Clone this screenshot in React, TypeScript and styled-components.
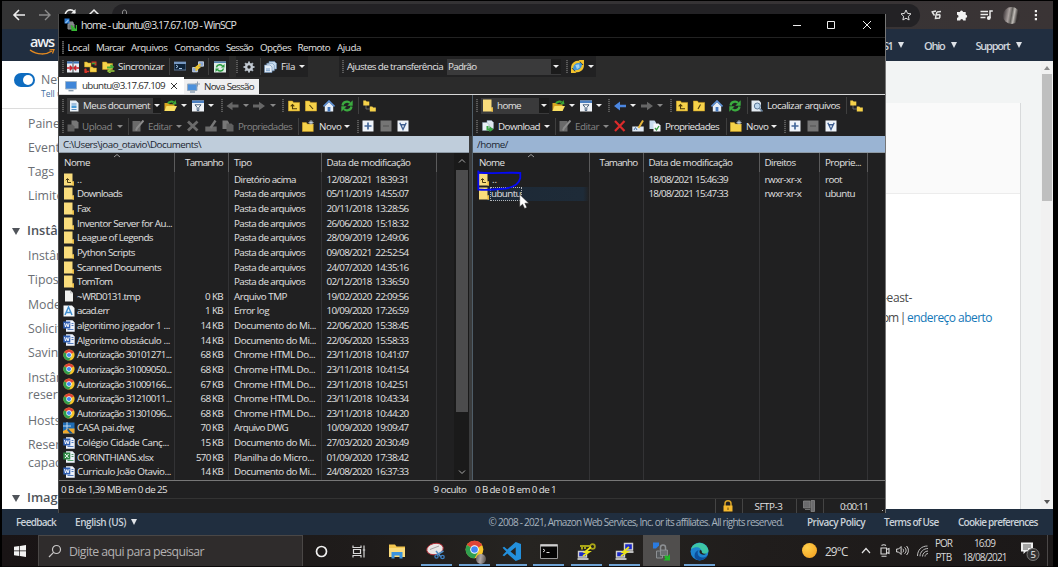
import React, { useLayoutEffect, useRef } from "react";
import styled, { createGlobalStyle, css } from "styled-components";

const Global = createGlobalStyle`
  * { box-sizing: border-box; }
  body { margin: 0; background: #000; overflow: hidden; }
`;

const UI = `"Open Sans", "Noto Sans", sans-serif`;

/* ---------- text that is tracked to a given measure ---------- */
const FitSpan = styled.span<{ $c?: string; $s?: number; $b?: boolean }>`
  display: inline-block;
  flex: none;
  white-space: pre;
  ${(p) => p.$c && css`color: ${p.$c};`}
  ${(p) => p.$s && css`font-size: ${p.$s}px;`}
  ${(p) => p.$b && css`font-weight: 600;`}
`;

function Fit({ w, children, c, s, b }: { w: number; children: string; c?: string; s?: number; b?: boolean }) {
  const ref = useRef<HTMLSpanElement>(null);
  useLayoutEffect(() => {
    const el = ref.current;
    if (!el) return;
    el.style.letterSpacing = "0px";
    const natural = el.getBoundingClientRect().width;
    el.style.letterSpacing = `${(w - natural) / children.length}px`;
  }, [w, children]);
  return (
    <FitSpan ref={ref} $c={c} $s={s} $b={b}>
      {children}
    </FitSpan>
  );
}

/* ---------- screen and browser page ---------- */
const Screen = styled.div`
  position: relative;
  width: 1058px;
  height: 567px;
  padding: 1px 5px 0 2px;
  background: #000;
  overflow: hidden;
  display: flex;
  flex-direction: column;
  font-family: ${UI};
  font-stretch: 92%;
`;

const BrowserBar = styled.div`
  height: 28px;
  flex: none;
  background: linear-gradient(90deg, #333334, #353335 60%, #3a3435);
  display: flex;
  align-items: center;
  padding-left: 10px;
  svg { flex: none; display: block; }
`;
const NavIcon = styled.div<{ $w: number }>`
  width: ${(p) => p.$w}px;
  flex: none;
`;
const Address = styled.div`
  width: 808px;
  height: 23px;
  flex: none;
  border-radius: 12px;
  background: #232225;
  display: flex;
  align-items: center;
  padding: 0 8px 0 9px;
  font-size: 11.5px;
  color: #8a8a8a;
  gap: 8px;
  & > span { padding-top: 4px; }
`;
const Push = styled.div`
  flex: 1;
`;
const Avatar = styled.div`
  width: 17px;
  height: 17px;
  border-radius: 50%;
  background: linear-gradient(100deg, #4c4547 10%, #aaa2a0 35%, #62605c 50%, #c2beb9 62%, #34302f 80%);
`;

const AwsBar = styled.div`
  height: 32px;
  flex: none;
  background: #212e40;
  display: flex;
  align-items: center;
  padding: 0 28px;
  color: #cfd5dc;
  font-size: 11px;
`;
const Tri = styled.i<{ $c?: string; $w?: number; $h?: number; $l?: number; $up?: boolean }>`
  flex: none;
  width: 0;
  height: 0;
  margin-left: ${(p) => p.$l ?? 0}px;
  border: solid transparent;
  border-width: 0 ${(p) => (p.$w ?? 7) / 2}px;
  ${(p) =>
    p.$up
      ? css`border-bottom: ${p.$h ?? 6}px solid ${p.$c ?? "#dfe3e8"};`
      : css`border-top: ${p.$h ?? 6}px solid ${p.$c ?? "#dfe3e8"};`}
`;
const Gap = styled.div<{ $w: number }>`
  width: ${(p) => p.$w}px;
  flex: none;
`;

const PageBody = styled.div`
  height: 448px;
  flex: none;
  display: flex;
  background: #fff;
`;
const Sidebar = styled.div`
  width: 200px;
  flex: none;
  color: #6a6e74;
  font-size: 12.3px;
  overflow: hidden;
`;
const NewBox = styled.div`
  height: 48px;
  border-bottom: 1px solid #dcdcdc;
  padding: 11px 0 0 12px;
  display: flex;
  gap: 6px;
  line-height: 16px;
`;
const Toggle = styled.div`
  width: 21px;
  height: 14px;
  margin-top: 1px;
  border-radius: 7px;
  background: #0e6cc0;
  display: flex;
  justify-content: flex-end;
  padding: 2px;
  &::after {
    content: "";
    width: 10px;
    height: 10px;
    border-radius: 50%;
    background: #fff;
  }
`;
const Tell = styled.div`
  font-size: 8.5px;
  line-height: 11px;
  color: #3f6f9f;
`;
const SideItem = styled.div<{ $h: number; $bold?: boolean }>`
  height: ${(p) => p.$h}px;
  padding-left: 26px;
  line-height: 16px;
  white-space: pre;
  ${(p) => p.$bold && css`
    font-weight: 600;
    color: #50545a;
    padding-left: 10px;
    display: flex;
    font-size: 12.8px;
    i { margin: 6px 7px 0 0; }
  `}
`;
const Content = styled.div`
  flex: 1;
  background: #f2f4f4;
  display: flex;
  padding-top: 42px;
`;
const Card = styled.div`
  width: 819px;
  flex: none;
  background: #fff;
  border-right: 1px solid #d8dadb;
  font-size: 12px;
  color: #4a4a4a;
  line-height: 19.5px;
`;
const CardHead = styled.div`
  height: 91px;
  background: #fafafa;
  border-bottom: 1px solid #ececec;
`;
const CardText = styled.div`
  padding: 94px 0 0 677px;
  white-space: pre;
`;
const AddrLine = styled.div`
  display: flex;
`;
const PageScroll = styled.div`
  width: 12px;
  background: #f1f1f1;
  display: flex;
  flex-direction: column;
  align-items: center;
  padding: 5px 1px 5px 0;
`;
const Thumb = styled.div`
  width: 10px;
  height: 127px;
  margin-top: 4px;
  background: #bfbfbf;
`;
const Footer = styled.div`
  height: 26px;
  flex: none;
  background: #202e3f;
  display: flex;
  align-items: center;
  padding-left: 14px;
  color: #c9d1d9;
  font-size: 10px;
  font-weight: 600;
`;

/* ---------- Windows taskbar ---------- */
const Taskbar = styled.div`
  height: 32px;
  flex: none;
  background: linear-gradient(90deg, #191415, #1f1c1b 35%, #262421 50%, #201d1c 72%, #1b1818);
  display: flex;
  align-items: stretch;
  border-bottom: 1px solid #0c0a0a;
  color: #d8d8d8;
  font-size: 10px;
`;
const Start = styled.div`
  width: 36px;
  display: flex;
  align-items: center;
  justify-content: center;
`;
const Search = styled.div`
  width: 265px;
  flex: none;
  background: #2f2c2c;
  border: 1px solid #4a4746;
  border-bottom: 0;
  display: flex;
  align-items: center;
  padding-left: 9px;
  gap: 7px;
  color: #b3b1b1;
  font-size: 12.3px;
`;
const Task = styled.div<{ $w: number; $open?: boolean; $active?: boolean }>`
  width: ${(p) => p.$w}px;
  flex: none;
  display: flex;
  align-items: center;
  justify-content: center;
  padding-top: 1px;
  ${(p) => p.$open && css`background: linear-gradient(#6ea2d4, #6ea2d4) center bottom / 31px 2px no-repeat;`}
  ${(p) => p.$active && css`background: #504e4d;`}
`;
const Tray = styled.div`
  flex: 1;
  display: flex;
  align-items: center;
`;
const Stack = styled.div<{ $w: number }>`
  width: ${(p) => p.$w}px;
  flex: none;
  display: flex;
  flex-direction: column;
  align-items: center;
  line-height: 13.5px;
`;
const Sun = styled.div`
  width: 15px;
  height: 15px;
  border-radius: 50%;
  background: radial-gradient(circle at 35% 30%, #ffcf4b, #f39c1c);
`;
const TrayEdge = styled.div`
  width: 1px;
  height: 31px;
  background: #4b4848;
`;
const FooterNote = styled.div`
  font-weight: 400;
  color: #a7b2bd;
`;
const ChromeWrap = styled.div`
  position: relative;
  i {
    position: absolute;
    right: -2px;
    bottom: -2px;
    width: 10px;
    height: 10px;
    border-radius: 50%;
    background: linear-gradient(100deg, #5c5557, #b0a8a6 45%, #4a4644);
  }
`;

/* ---------- WinSCP window ---------- */
const Window = styled.div`
  position: absolute;
  left: 58px;
  top: 14px;
  width: 828px;
  height: 499px;
  background: #202021;
  border-left: 1px solid #4c4c4c;
  border-right: 1px solid #777;
  color: #e2e2e2;
  font-size: 9.8px;
  display: flex;
  flex-direction: column;
  white-space: pre;
  svg { display: block; flex: none; }
`;
const Title = styled.div`
  height: 24px;
  flex: none;
  background: #000;
  border-bottom: 1px solid #222;
  display: flex;
  align-items: center;
  padding: 0 14px 2px 5px;
  gap: 4px;
`;
const Menu = styled.div`
  height: 18px;
  flex: none;
  background: #000;
  display: flex;
  align-items: center;
  padding-left: 3px;
`;
const TopTools = styled.div`
  height: 21px;
  flex: none;
  background: #2b2b2b;
  display: flex;
`;
const Strip = styled.div<{ $l?: number; $h?: number }>`
  height: ${(p) => p.$h ?? 21}px;
  flex: none;
  background: #212122;
  display: flex;
  align-items: center;
  padding-left: ${(p) => p.$l ?? 3}px;
`;
const Slot = styled.div<{ $w: number }>`
  width: ${(p) => p.$w}px;
  flex: none;
  display: flex;
  align-items: center;
`;
const Grip = styled.div`
  width: 2px;
  height: 13px;
  background: repeating-linear-gradient(#5a5a5a 0 1px, #2a2a2a 1px 2px);
`;
const Line = styled.div`
  width: 1px;
  height: 17px;
  margin-left: 1px;
  background: #3f3f3f;
`;
const ComboBox = styled.div<{ $w: number }>`
  width: ${(p) => p.$w}px;
  height: 16px;
  background: #3a3a3b;
  display: flex;
  align-items: center;
  padding-left: 1px;
  gap: 3px;
`;
const ComboButton = styled.div`
  width: 10px;
  height: 15px;
  margin-left: auto;
  background: #1b1b1b;
  display: flex;
  align-items: center;
  justify-content: center;
`;
const Tabs = styled.div`
  height: 18px;
  flex: none;
  background: #2b2b2b;
  border-bottom: 1px solid #d8d8d8;
  display: flex;
  align-items: flex-end;
  color: #2a2a2a;
`;
const Tab = styled.div<{ $w: number; $on?: boolean }>`
  width: ${(p) => p.$w}px;
  height: ${(p) => (p.$on ? 17 : 15)}px;
  background: ${(p) => (p.$on ? "#fff" : "#efeff0")};
  display: flex;
  align-items: center;
  padding-left: ${(p) => (p.$on ? 6 : 3)}px;
  gap: ${(p) => (p.$on ? 5 : 4)}px;
`;
const Panels = styled.div`
  height: 386px;
  flex: none;
  display: flex;
  border-bottom: 1px solid #777;
`;
const Panel = styled.div<{ $w: number }>`
  width: ${(p) => p.$w}px;
  flex: none;
  display: flex;
  flex-direction: column;
`;
const Splitter = styled.div`
  width: 4px;
  background: linear-gradient(#212122 41px, #3a3b3c 41px);
  border-right: 1px solid #4f5d68;
`;
const PathBar = styled.div<{ $active?: boolean }>`
  height: 17px;
  flex: none;
  border-bottom: 1px solid #8e9aa5;
  background: ${(p) => (p.$active ? "#9ab4d3" : "#bfcddb")};
  color: #1b2530;
  display: flex;
  align-items: center;
  padding-left: 4px;
`;
const List = styled.div`
  flex: 1;
  min-height: 0;
  overflow: hidden;
  display: flex;
`;
const Column = styled.div<{ $w: number; $right?: boolean }>`
  width: ${(p) => p.$w}px;
  flex: none;
  border-right: 1px solid #333335;
  text-align: left;
  ${(p) => p.$right && css`& > div { justify-content: flex-end; padding-right: 5px; }`}
`;
const Head = styled.div`
  position: relative;
  height: 19px;
  margin-right: -1px;
  border-right: 1px solid #5b5b5c;
  padding-left: 5px;
  display: flex;
  align-items: center;
  & > svg { position: absolute; top: 0; left: 54px; }
`;
const Cell = styled.div<{ $icon?: boolean; $hot?: boolean }>`
  height: 14.63px;
  padding-left: ${(p) => (p.$icon ? 4 : 5)}px;
  display: flex;
  align-items: center;
  gap: 1px;
  ${(p) => p.$hot && css`background: linear-gradient(90deg, #212122 14px, #1d2936 15px, #1e2b38 95%, #212122);`}
`;
const Focus = styled.span`
  outline: 1px dotted #b5b5b5;
  line-height: 12px;
`;
const ListScroll = styled.div`
  width: 15px;
  margin-left: auto;
  background: #1a1a1a;
  display: flex;
  flex-direction: column;
  align-items: center;
  justify-content: space-between;
  padding: 5px 0;
  & > div { width: 12px; height: 242px; background: #4c4c4d; margin-bottom: 56px; margin-top: 4px; }
`;
const StatusRow = styled.div`
  height: 18px;
  flex: none;
  display: flex;
  align-items: center;
  padding-left: 2px;
  border-bottom: 1px solid #333;
`;
const BottomRow = styled.div`
  height: 14px;
  flex: none;
  display: flex;
  justify-content: flex-end;
`;
const StatusCell = styled.div<{ $w: number }>`
  width: ${(p) => p.$w}px;
  border-left: 1px solid #444;
  padding-right: 2px;
  display: flex;
  align-items: center;
  justify-content: center;
`;
const Resize = styled.div`
  width: 7px;
  height: 7px;
  flex: none;
  margin: 7px 0 0 -8px;
  background: radial-gradient(circle, #bbb 0.7px, transparent 1px) 0 0 / 3px 3px;
  clip-path: polygon(100% 0, 100% 100%, 0 100%);
`;
const Overlay = styled.svg`
  position: absolute;
  left: 470px;
  top: 166px;
  pointer-events: none;
`;

/* ---------- icons ---------- */
const Svg = ({ children, w = 12, h = 12, vb = "0 0 12 12" }: any) => (
  <svg width={w} height={h} viewBox={vb} fill="none">
    {children}
  </svg>
);

const yellow = "#f6d24a";
const smallFolder = (x: number, y: number) => (
  <path d={`M${x} ${y}h2.5l1 1h3v4h-6.5z`} fill={yellow} stroke="#c99a1c" strokeWidth=".5" />
);
const page = (x: number, y: number, c = "#dfe8f1") => (
  <path d={`M${x} ${y}h4.5l2 2v6h-6.5z`} fill={c} stroke="#8aa0b5" strokeWidth=".5" />
);

const icons: Record<string, React.ReactNode> = {
  compare: (
    <Svg>
      <path d="M0 .5h5.6v11H0zM6.4.5H12v11H6.400z" fill="#e9eef4" />
      <path d="M0 .5h5.600v2H0zM6.400.5H12v2H6.400z" fill="#3d74b8" />
      <path d="M0 7h4.500M7.500 7H12M2.800 4.800 5 7 2.800 9.200M9.200 4.800 7 7l2.200 2.200" stroke="#c8202a" strokeWidth="1.500" />
    </Svg>
  ),
  transfer: (
    <Svg w={13} vb="0 0 13 12">
      {smallFolder(0.5, 1)}
      {smallFolder(6, 6)}
      <path d="M7.500 1.500h4v3M3 11H1.500V8" stroke="#d63529" strokeWidth="2" />
      <path d="M1.500 7.500v3H5" stroke="#d63529" strokeWidth="1.600" />
      <path d="M8 2.500h3.500" stroke="#39a335" strokeWidth="1.600" />
    </Svg>
  ),
  syncFolder: (
    <Svg w={13} vb="0 0 13 12">
      <path d="M.5 1h4l1 1.500h5v6H.5z" fill={yellow} stroke="#c99a1c" strokeWidth=".5" />
      <path d="M5 6.500h5.500M8.500 4l3 2.500" stroke="#49ad3c" strokeWidth="1.800" />
      <path d="M12.500 10h-5M8.500 8 6 10l2.500 2" stroke="#9ccf3f" strokeWidth="1.500" />
    </Svg>
  ),
  term: (
    <Svg>
      <path d="M0 1h12v8H0z" fill="#0d2238" stroke="#5c7798" />
      <path d="M0 1h12v2H0z" fill="#7596c0" />
      <path d="m2 4 2 1.500L2 7M5 7.500h3" stroke="#a9c7e8" />
    </Svg>
  ),
  putty: (
    <Svg>
      <path d="M6.500.8h5v4.400h-5zM.6 6.500h5v4.400h-5z" fill="#86a5d8" stroke="#d6dfea" strokeWidth=".8" />
      <path d="M8.500 3 4 6.500h3L3.500 9.500" stroke="#f0c52e" strokeWidth="1.700" />
    </Svg>
  ),
  refreshBox: (
    <Svg>
      <path d="M0 .5h12v11H0z" fill="#dcebe4" />
      <path d="M0 .5h12v1.500H0z" fill="#5583b3" />
      <path d="M2.500 6.300c.5-3 5-3.500 6-1M9.500 7.500c-.5 3-5 3.500-6 1" stroke="#259b3b" strokeWidth="1.500" />
      <path d="M10.500 3v3.500H7zM1.500 11V7.500H5z" fill="#259b3b" />
    </Svg>
  ),
  gear: (
    <Svg>
      <path d="M6 .5v11M.5 6h11M2.100 2.100l7.800 7.800M9.900 2.100l-7.800 7.800" stroke="#aeb6bf" strokeWidth="2" />
      <circle cx="6" cy="6" r="4" fill="#c3cad2" />
      <circle cx="6" cy="6" r="1.700" fill="#212122" />
    </Svg>
  ),
  queue: (
    <Svg w={13} vb="0 0 13 12">
      <path d="M5 .5h5.500l2 2V8H5z" fill="#c3d8ec" stroke="#6b8fb5" strokeWidth=".6" />
      <path d="M2.800 2.300h5.500l2 2v5.500H2.800z" fill="#cfe0f0" stroke="#6b8fb5" strokeWidth=".6" />
      <path d="M.5 4h5.500l2 2v5.500H.5z" fill="#e4eef8" stroke="#6b8fb5" strokeWidth=".6" />
      <path d="M2 8h4M2 9.700h4" stroke="#5d8ec0" strokeWidth=".8" />
    </Svg>
  ),
  globe: (
    <Svg w={13} h={13}>
      <circle cx="6" cy="6" r="4.600" fill="#3f95dc" />
      <path d="M4 4.500 7.500 4 8 7 5.500 8.500z" fill="#9fd0ee" />
      <path d="M1 7.500C1 3 5 1.200 8 2M11 4.500C11 9 7 10.800 4 10" stroke="#f2c32d" strokeWidth="2" />
      <path d="M7 0H12v5zM5 12H0V7z" fill="#f2c32d" />
    </Svg>
  ),
  open: (
    <Svg w={13} vb="0 0 13 12">
      <path d="M.5 3h4l1 1.200h5V11H.5z" fill="#d9a520" />
      <path d="M.5 11 2.500 6H13l-2.500 5z" fill="#f9e063" />
      <path d="M4 3.500C5 1.500 8 1 9.500 2.200" stroke="#3aa536" strokeWidth="2" />
      <path d="m8 4.500 4.500-.2L11.500 0z" fill="#3aa536" />
    </Svg>
  ),
  filter: (
    <Svg>
      <path d="M0 .5h12v11H0z" fill="#eef2f7" />
      <path d="M0 .5h12V3H0z" fill="#4a7fc1" />
      <path d="M3 4.800h6L6.800 7.500v3H5.200v-3z" fill="#fff" stroke="#34506e" strokeWidth=".9" />
    </Svg>
  ),
  back: <Svg w={13}><path d="M6 1.800 0 6l6 4.200V7.500h6v-3H6z" fill="#666" /></Svg>,
  backOn: <Svg><path d="M6 1.500 0 6l6 4.500V7.300h6V4.700H6z" fill="#4b86e0" /></Svg>,
  fwd: <Svg><path d="M6 1.800 12 6l-6 4.200V7.500H0v-3h6z" fill="#666" /></Svg>,
  up: (
    <Svg>
      <path d="M.3 1h4.200l1 1.400h6.200V11H.3z" fill={yellow} stroke="#c99a1c" strokeWidth=".5" />
      <path d="M9 8.700H4.500V5M2.700 6.300l1.800-1.800 1.800 1.800" stroke="#4c3a0a" strokeWidth="1.100" />
    </Svg>
  ),
  root: (
    <Svg>
      <path d="M.3 1h4.200l1 1.400h6.200V11H.3z" fill={yellow} stroke="#c99a1c" strokeWidth=".5" />
      <path d="m4.500 5 3.500 4" stroke="#4c3a0a" strokeWidth="1.100" />
    </Svg>
  ),
  rootR: (
    <Svg>
      <path d="M.3 1h4.200l1 1.400h6.200V11H.3z" fill={yellow} stroke="#c99a1c" strokeWidth=".5" />
      <path d="M7.500 4.500 5 9" stroke="#4c3a0a" strokeWidth="1.100" />
    </Svg>
  ),
  home: (
    <Svg>
      <path d="M1.800 6v5.500h8.400V6L6 2z" fill="#e6eef7" />
      <path d="M.5 6.500 6 1l5.500 5.500" stroke="#5f92d6" strokeWidth="1.600" />
      <path d="M4.600 7h2.800v4.500H4.600z" fill="#4478bf" />
    </Svg>
  ),
  refresh: (
    <Svg>
      <path d="M1.500 5.500C2 1.500 7 .8 9 3M10.500 6.500c-.5 4-5.500 4.700-7.500 2.500" stroke="#3bab3f" strokeWidth="2.200" />
      <path d="M11.700.3v5.400H6.300zM.3 11.700V6.300h5.400z" fill="#3bab3f" />
    </Svg>
  ),
  tree: (
    <Svg w={13} vb="0 0 13 12">
      <path d="M3 5v4h4" stroke="#777" strokeWidth=".8" />
      <path d="M.3.500h2.500l.8 1h2.700v4h-6z M6.800 6.500h2.500l.8 1h2.700v4h-6z" fill={yellow} />
    </Svg>
  ),
  find: (
    <Svg>
      <path d="M.5.500h7.500l2 2v9H.5z" fill="#e4ebf2" />
      <circle cx="6.300" cy="6" r="3" fill="#bcd6ee" stroke="#5b7896" />
      <path d="m8.500 8.200 3 3.300" stroke="#6d87a2" strokeWidth="1.600" />
    </Svg>
  ),
  upload: (
    <Svg>
      <path d="M4.500.500h5l2 2v6h-7z" fill="#777" />
      <path d="M.5 4.500h5l2 2v5h-7z" fill="#5e5e5e" />
    </Svg>
  ),
  download: (
    <Svg>
      {page(5, 0.5)}
      {page(0.5, 2.5, "#e9f0f6")}
      <path d="M5.500 6v3.500h3" stroke="#3aa545" strokeWidth="2" />
      <path d="M7.500 6 11.500 9.500 7.500 12z" fill="#3aa545" />
    </Svg>
  ),
  edit: (
    <Svg>
      <path d="M.5 1h8v10.500h-8z" fill="#6a6a6a" />
      <path d="M11.500.500 5 8l-1 2.500" stroke="#8b8b8b" strokeWidth="2" />
    </Svg>
  ),
  cross: <Svg><path d="m1 1.500 9.500 9M10.500 1.500l-9.500 9" stroke="#6b6b6b" strokeWidth="2.800" /></Svg>,
  crossOn: <Svg><path d="m1 1 9.500 10M10.500 1 1 11" stroke="#dc2b2b" strokeWidth="2.200" /></Svg>,
  rename: (
    <Svg>
      <path d="M.3 6.500h11.400v5H.3z" fill="#6a6a6a" />
      <path d="M10.500.500 5.500 8" stroke="#777" strokeWidth="2.400" />
    </Svg>
  ),
  renameOn: (
    <Svg>
      <path d="M.3 6.500h11.400v5H.3z" fill="#dfe8f2" />
      <path d="m2 10 1.500-2.500L5 10" stroke="#4a77ad" />
      <path d="M11 .5 6.500 8" stroke="#e6b63c" strokeWidth="2" />
    </Svg>
  ),
  props: (
    <Svg>
      <path d="M.5.500h5l1.500 2V9H.5z" fill="#777" />
      <path d="M4.500 3.500h5l2 2v6h-7z" fill="#606060" />
    </Svg>
  ),
  propsOn: (
    <Svg>
      <path d="M.5.500h5l1.500 2V9H.5z" fill="#c8dcee" />
      <path d="M4.500 3.500h5l2 2v6h-7z" fill="#f4f7fa" />
      <path d="m6 8 1.500 1.800L10 6" stroke="#37a043" strokeWidth="1.300" />
    </Svg>
  ),
  newFolder: (
    <Svg>
      <path d="M.3 2.500h4l1 1.500h6v7.500H.3z" fill={yellow} stroke="#c99a1c" strokeWidth=".5" />
      <path d="M9 0v5M6.500 2.500h5M7.300.8l3.400 3.400M10.700.8 7.300 4.200" stroke="#c5d4e6" strokeWidth=".8" />
    </Svg>
  ),
  plus: (
    <Svg>
      <path d="M.5.500h11v11H.5z" fill="#eef3f9" />
      <path d="M6 2.500v7M2.500 6h7" stroke="#44689b" strokeWidth="1.700" />
    </Svg>
  ),
  minus: (
    <Svg>
      <path d="M.5.500h11v11H.5z" fill="#757575" />
      <path d="M3 6h6" stroke="#5e5e5e" strokeWidth="1.500" />
    </Svg>
  ),
  invert: (
    <Svg>
      <path d="M.5.500h11v11H.5z" fill="#eef3f9" />
      <path d="M2.800 2.800 6 9.500l3.200-6.700M3.500 4.800h5" stroke="#3f5f91" strokeWidth="1.400" />
    </Svg>
  ),
};

type ToolItem = [kind: string, w: number, label?: string, labelW?: number, dim?: boolean];

const Tool = ({ it }: { it: ToolItem }) => {
  const [kind, w, label, labelW, dim] = it;
  return (
    <Slot $w={w}>
      {kind === "grip" && <Grip />}
      {kind === "sep" && <Line />}
      {kind === "drop" && <Tri $c="#eee" $w={6} $h={3} />}
      {kind === "dropDim" && <Tri $c="#888" $w={6} $h={3} />}
      {kind === "text" && <Fit w={labelW!} c={dim ? "#858585" : "#e6e6e6"}>{label!}</Fit>}
      {icons[kind]}
    </Slot>
  );
};
const Items = ({ list }: { list: ToolItem[] }) => (
  <>
    {list.map((it, i) => (
      <Tool key={i} it={it} />
    ))}
  </>
);

const FolderIcon = ({ up }: { up?: boolean }) => (
  <Svg w={12} h={13} vb="0 0 12 13">
    <path d="M1 .5h8.500v8h1.500v4H1z" fill="#f9dc7c" />
    <path d="M9.500 8.500H11v4H9.500z" fill="#e9b93c" />
    {up && <path d="M8 9.500H4.500V6M2.800 7.200l1.700-1.700 1.700 1.700" stroke="#4a3a12" />}
  </Svg>
);
const ChromeIcon = ({ s = 12 }: { s?: number }) => (
  <Svg w={s} h={s}>
    <circle cx="6" cy="6" r="5.600" fill="#f7c52b" />
    <path d="M6 6 1.150 3.200A5.600 5.600 0 0 1 10.850 3.200z" fill="#df4436" />
    <path d="M1.150 3.200A5.600 5.600 0 0 0 6 11.600L8.400 7.400 6 6z" fill="#2f9e4f" />
    <path d="M6 3.200h4.850L6 6z" fill="#df4436" />
    <circle cx="6" cy="6" r="2.700" fill="#fff" />
    <circle cx="6" cy="6" r="2.100" fill="#4285f4" />
  </Svg>
);
const fileIcon = (k: string) => {
  if (k === "up") return <FolderIcon up />;
  if (k === "dir") return <FolderIcon />;
  if (k === "chrome") return <ChromeIcon />;
  if (k === "tmp") return <Svg><path d="M2 .5h5.500L10 3v8.500H2z" fill="#f1f1ef" /><path d="M7.500.500V3H10" stroke="#aaa" strokeWidth=".6" /></Svg>;
  if (k === "err") return <Svg><path d="M.5.500h8.500L11.500 3v8.500H.5z" fill="#f4f8fb" /><path d="M2 10 5.500 2 9 10M3.300 7.500h4.400" stroke="#3f8fd0" strokeWidth="1.500" /></Svg>;
  if (k === "dwg") return <Svg><path d="M0 .5h11.500v11H0z" fill="#1f6db5" /><path d="M0 11.500V9l5-2.500h6.500v5z" fill="#f0a92c" /><path d="M4 0v8M0 4h8" stroke="#cfe4f6" strokeWidth=".9" /><path d="m5 6.500 5 5H7L4 8z" fill="#175490" /></Svg>;
  const c = k === "xls" ? "#2f8a45" : "#2f5fb3";
  return (
    <Svg>
      <path d="M3 .3h6.500L11.700 2.500v9.200H3z" fill="#eef3fb" />
      <path d="M8.500 3.500h2M8.500 5.500h2M4.500 9.500h6" stroke={c} strokeWidth=".8" />
      <path d="M.3 1.500h7v7h-7z" fill={c} />
      {k === "xls" ? <path d="m2 3 3.600 4M5.600 3 2 7" stroke="#fff" /> : <path d="m1.500 3 1 4 1.300-3.500L5 7l1.200-4" stroke="#fff" strokeWidth=".9" />}
    </Svg>
  );
};

/* ---------- data ---------- */
const PASTA = "Pasta de arquivos";
const files: [string, string, number, string, string, number, string][] = [
  ["up", "..", 5, "", "Diretório acima", 62, "12/08/2021  18:39:31"],
  ["dir", "Downloads", 45, "", PASTA, 71, "05/11/2019  14:55:07"],
  ["dir", "Fax", 13, "", PASTA, 71, "20/11/2018  13:28:56"],
  ["dir", "Inventor Server for Au...", 95, "", PASTA, 71, "26/06/2020  15:18:32"],
  ["dir", "League of Legends", 76, "", PASTA, 71, "28/09/2019  12:49:06"],
  ["dir", "Python Scripts", 58, "", PASTA, 71, "09/08/2021  22:52:54"],
  ["dir", "Scanned Documents", 84, "", PASTA, 71, "24/07/2020  14:35:16"],
  ["dir", "TomTom", 35, "", PASTA, 71, "02/12/2018  13:36:50"],
  ["tmp", "~WRD0131.tmp", 63, "0 KB", "Arquivo TMP", 53, "19/02/2020  22:09:56"],
  ["err", "acad.err", 32, "1 KB", "Error log", 35, "10/09/2020  17:26:59"],
  ["doc", "algoritimo jogador 1 ...", 93, "14 KB", "Documento do Mi...", 82, "22/06/2020  15:38:45"],
  ["doc", "Algoritmo obstáculo ...", 93, "14 KB", "Documento do Mi...", 82, "22/06/2020  15:58:33"],
  ["chrome", "Autorização 30101271...", 94.5, "68 KB", "Chrome HTML Do...", 81, "23/11/2018  10:41:07"],
  ["chrome", "Autorização 31009050...", 94.5, "68 KB", "Chrome HTML Do...", 81, "23/11/2018  10:41:54"],
  ["chrome", "Autorização 31009166...", 94.5, "67 KB", "Chrome HTML Do...", 81, "23/11/2018  10:42:51"],
  ["chrome", "Autorização 31210011...", 94.5, "68 KB", "Chrome HTML Do...", 81, "23/11/2018  10:43:34"],
  ["chrome", "Autorização 31301096...", 94.5, "68 KB", "Chrome HTML Do...", 81, "23/11/2018  10:44:20"],
  ["dwg", "CASA pai.dwg", 57, "70 KB", "Arquivo DWG", 54, "10/09/2020  19:09:47"],
  ["doc", "Colégio Cidade Canç...", 92, "15 KB", "Documento do Mi...", 82, "27/03/2020  20:30:49"],
  ["xls", "CORINTHIANS.xlsx", 76.5, "570 KB", "Planilha do Micro...", 80, "01/09/2020  17:38:42"],
  ["doc", "Curriculo João Otavio...", 94, "14 KB", "Documento do Mi...", 82, "24/08/2020  16:37:33"],
];
const sizeW: Record<string, number> = { "0 KB": 18, "1 KB": 18, "570 KB": 27 };

const menu: [string, number, number][] = [
  ["Local", 22, 28.5], ["Marcar", 28.5, 35], ["Arquivos", 36.5, 43.5], ["Comandos", 44.5, 51.5],
  ["Sessão", 27, 34], ["Opções", 31, 37.5], ["Remoto", 32.5, 39.5], ["Ajuda", 24, 30],
];

const top1: ToolItem[] = [["grip", 5], ["compare", 17], ["transfer", 18], ["syncFolder", 16], ["text", 50, "Sincronizar", 46], ["sep", 6], ["term", 18], ["putty", 15], ["sep", 7], ["refreshBox", 15]];
const top2: ToolItem[] = [["grip", 7], ["gear", 16], ["sep", 5], ["queue", 17], ["text", 18, "Fila", 14], ["drop", 9]];

const local2: ToolItem[] = [["open", 17], ["drop", 11], ["filter", 16], ["drop", 13], ["grip", 5], ["back", 17], ["dropDim", 10], ["fwd", 17], ["dropDim", 12], ["grip", 6], ["up", 17], ["root", 18], ["home", 18], ["refresh", 16], ["sep", 6], ["tree", 13]];
const local3: ToolItem[] = [["grip", 5], ["upload", 15], ["text", 35, "Upload", 30, true], ["dropDim", 10], ["sep", 5], ["edit", 16], ["text", 28, "Editar", 24, true], ["dropDim", 11], ["cross", 18], ["rename", 17], ["props", 16], ["text", 59, "Propriedades", 54, true], ["sep", 5], ["newFolder", 17], ["text", 25, "Novo", 22.5], ["drop", 13], ["grip", 5], ["plus", 18], ["minus", 17], ["invert", 12]];
const remote2: ToolItem[] = [["open", 17], ["drop", 11], ["filter", 16], ["drop", 12], ["grip", 6], ["backOn", 16], ["drop", 11], ["fwd", 16], ["dropDim", 13], ["grip", 6], ["up", 17], ["rootR", 18], ["home", 18], ["refresh", 17], ["sep", 5], ["find", 16], ["text", 78, "Localizar arquivos", 73], ["sep", 5], ["tree", 13]];
const remote3: ToolItem[] = [["grip", 6], ["download", 16], ["text", 46, "Download", 42], ["drop", 10], ["sep", 5], ["edit", 16], ["text", 28, "Editar", 24, true], ["dropDim", 11], ["crossOn", 18], ["renameOn", 17], ["propsOn", 16], ["text", 60, "Propriedades", 54], ["sep", 5], ["newFolder", 16], ["text", 25, "Novo", 22.5], ["drop", 13], ["grip", 5], ["plus", 18], ["minus", 18], ["invert", 12]];

const side: [string, number][] = [["Painel", 24.2], ["Eventos", 24.2], ["Tags", 24.2], ["Limites", 34]];
const side2: [string, number][] = [["Instâncias", 24.5], ["Tipos", 24.5], ["Modelos", 24.3], ["Solicitações", 24.4], ["Savings", 24.6], ["Instâncias", 17.5], ["reservadas", 25.5], ["Hosts", 24.4], ["Reservas", 17.5], ["capacidade", 34]];

const SortMark = () => <Svg w={8} h={5} vb="0 0 8 5"><path d="m1 4 3-2.500L7 4" stroke="#999" /></Svg>;

const Monitor = () => (
  <Svg><path d="M.5 1.500h11v7.500H.5z" fill="#3f86d8" stroke="#9fb6cc" /><path d="M3.500 10.700h5" stroke="#8196aa" strokeWidth="1.300" /></Svg>
);

const Terminals = ({ keyed }: { keyed?: boolean }) => (
  <Svg w={19} h={19} vb="0 0 19 19">
    {!keyed && <path d="M9.500 1.500h8v6.500h-8z" fill="#1a28c8" stroke="#d0d0d0" strokeWidth="1.400" />}
    {!keyed && <path d="M9 10h9.500" stroke="#bdbdbd" strokeWidth="2" />}
    {keyed && <path d="M3 4h11M5 5v2.500M8 5v2" stroke="#a8a418" strokeWidth="2" />}
    {keyed && <circle cx="15.500" cy="4.500" r="2.400" stroke="#a8a418" strokeWidth="1.700" />}
    <path d="M1.500 9.500h8V15h-8z" fill="#1a28c8" stroke="#d0d0d0" strokeWidth="1.400" />
    <path d="M.5 17h11" stroke="#bdbdbd" strokeWidth="2" />
    <path d="m14 5-6 5h4l-6 4" stroke="#e9e21c" strokeWidth="1.800" />
  </Svg>
);

const WinScpIcon = () => (
  <Svg w={13} h={13} vb="0 0 13 13">
    <path d="M5 6V4h4v3M4 6h6v5H4z" fill="#777" stroke="#8f9498" />
    <path d="M.5.500h5v5h-5z" fill="#2a78d0" />
    <path d="m1.500 5 3-3" stroke="#8fc2f2" strokeWidth="1.300" />
    <path d="M7 7.500 12.500 12.500H7.500M12.500 7v5.500" fill="#36a834" stroke="#36b834" strokeWidth="1.400" />
  </Svg>
);
const WinScpLarge = () => (
  <Svg w={19} h={19} vb="0 0 19 19">
    <path d="M8.500 8V5.500a2.500 2.500 0 0 1 5 0V8" stroke="#8d9093" strokeWidth="1.500" />
    <path d="M4.500 9h6v7h-6z" fill="#55585b" stroke="#8d9093" />
    <path d="M8.500 8h7v5.500h-7z" fill="#6c7073" stroke="#9a9da0" strokeWidth=".7" />
    <path d="M1 .5h6v3L4 6.500H1z" fill="#2a7be0" />
    <path d="M18 12v6.500h-6.500l2-2-1.500-1.500 2-2 1.500 1.500z" fill="#22b52a" />
  </Svg>
);

export default function App() {
  return (
    <Screen>
      <Global />
      <BrowserBar>
        <NavIcon $w={26}>
          <Svg w={14} h={14} vb="0 0 14 14"><path d="M13 7H2M7 2 2 7l5 5" stroke="#eee" strokeWidth="1.600" /></Svg>
        </NavIcon>
        <NavIcon $w={25}>
          <Svg w={14} h={14} vb="0 0 14 14"><path d="M1 7h10M7 2l5 5-5 5" stroke="#8b8b8b" strokeWidth="1.400" /></Svg>
        </NavIcon>
        <NavIcon $w={24}>
          <Svg w={14} h={14} vb="0 0 14 14"><path d="M11.500 9.500A5 5 0 1 1 11 3.500L12 5" stroke="#eee" strokeWidth="1.600" /><path d="M12.500 1v4.500H8z" fill="#eee" /></Svg>
        </NavIcon>
        <NavIcon $w={25}>
          <Svg w={14} h={14} vb="0 0 14 14"><path d="m1 8 6-6 6 6M3 7v6h8V7" stroke="#eee" strokeWidth="1.500" /></Svg>
        </NavIcon>
        <Address>
          <Svg w={7} h={12} vb="0 0 7 12"><path d="M1.500 5V3a2 2 0 0 1 4 0v2M.8 5.500h5.400v4H.8z" stroke="#8a8a8a" /></Svg>
          <Fit w={564}>us-east-2.console.aws.amazon.com/ec2/v2/home?region=us-east-2#InstanceDetails:instanceId=i-0978321d4361db28d</Fit>
          <Push />
          <Svg w={12} h={12}><path d="m6 1 1.500 3.400 3.500.4-2.600 2.500.7 3.700L6 9.200 2.900 11l.7-3.700L1 4.800l3.500-.4z" stroke="#ddd" /></Svg>
        </Address>
        <Gap $w={11} />
        <Svg w={12} h={12}><path d="M.5 3 5 2M3.500 6.500 1.500 3.500M6 3l4-.5M6 3l-1 3 4-.5M5 6l-.5 3.500 4.500-.5M9 5.500 8.700 9" stroke="#e3e3e3" strokeWidth="1.500" /></Svg>
        <Gap $w={13} />
        <Svg w={12} h={12}><path d="M1 3h3a1.500 1.500 0 1 1 3 0h2.700v2.800a1.500 1.500 0 1 1 0 3V11.500H7.200a1.500 1.500 0 0 0-3 0H1V8.800a1.500 1.500 0 0 0 0-3z" fill="#f2f2f2" /></Svg>
        <Gap $w={12} />
        <Svg w={13} h={12} vb="0 0 13 12"><path d="M.5 2.500h7.500M.5 5.500h7.500M.5 8.500h5M10 9V2h2.800" stroke="#ececec" strokeWidth="1.500" /><circle cx="8.800" cy="9" r="1.900" fill="#ececec" /></Svg>
        <Gap $w={10} />
        <Avatar />
        <Gap $w={14} />
        <Svg w={4} h={12} vb="0 0 4 12"><path d="M.8 1h2.200v2.200H.8zM.8 5h2.200v2.200H.8zM.8 9h2.200v2.200H.8z" fill="#f0f0f0" /></Svg>
      </BrowserBar>

      <AwsBar>
        <Stack $w={24}>
          <Fit w={24} s={14.5} c="#eef1f4" b>aws</Fit>
          <Svg w={26} h={6} vb="0 0 26 6"><path d="M1 1c7 5 16 5 22 1" stroke="#e58a1f" strokeWidth="1.500" /><path d="M20.500.800 25 .5 23.500 4.500" stroke="#e58a1f" strokeWidth="1.200" /></Svg>
        </Stack>
        <Gap $w={829} />
        <Fit w={9} b>S1</Fit>
        <Tri $l={6} />
        <Gap $w={20} />
        <Fit w={20.5} b>Ohio</Fit>
        <Tri $l={6} />
        <Gap $w={19} />
        <Fit w={34} b>Support</Fit>
        <Tri $l={6} />
      </AwsBar>

      <PageBody>
        <Sidebar>
          <NewBox>
            <Toggle />
            <div>
              New
              <Tell>Tell us</Tell>
            </div>
          </NewBox>
          <SideItem $h={6.5}>{""}</SideItem>
          {side.map(([t, h], i) => <SideItem key={i} $h={h}>{t}</SideItem>)}
          <SideItem $h={25.5} $bold><Tri $c="#50545a" $w={9} $h={7} />Instâncias</SideItem>
          {side2.map(([t, h], i) => <SideItem key={i} $h={h}>{t}</SideItem>)}
          <SideItem $h={20} $bold><Tri $c="#50545a" $w={9} $h={7} />Imagens</SideItem>
        </Sidebar>
        <Content>
          <Card>
            <CardHead />
            <CardText>
              <AddrLine><Gap $w={4} /><Fit w={29}>-east-</Fit></AddrLine>
              <AddrLine><Gap $w={3} /><Fit w={25}>om | </Fit><Fit w={85} c="#1478b8">endereço aberto</Fit></AddrLine>
            </CardText>
          </Card>
        </Content>
        <PageScroll>
          <Tri $up $c="#8b8b8b" $w={6} $h={4} />
          <Thumb />
          <Push />
          <Tri $c="#555" $w={6} $h={4} />
        </PageScroll>
      </PageBody>

      <Footer>
        <Fit w={40}>Feedback</Fit>
        <Gap $w={19} />
        <Fit w={51}>English (US)</Fit>
        <Tri $l={5} />
        <Gap $w={351.5} />
        <FooterNote><Fit w={295}>© 2008 - 2021, Amazon Web Services, Inc. or its affiliates. All rights reserved.</Fit></FooterNote>
        <Gap $w={23.5} />
        <Fit w={58}>Privacy Policy</Fit>
        <Gap $w={19} />
        <Fit w={54.5}>Terms of Use</Fit>
        <Gap $w={19.5} />
        <Fit w={79.5}>Cookie preferences</Fit>
      </Footer>

      <Taskbar>
        <Start>
          <Svg w={12} h={12}><path d="M0 1.700 5.300 1v4.600H0zM6 .9 12 0v5.600H6zM0 6.300h5.300v4.600L0 10.200zM6 6.300h6V12l-6-.9z" fill="#f2f2f2" /></Svg>
        </Start>
        <Search>
          <Svg w={14} h={14} vb="0 0 14 14"><circle cx="8.500" cy="5.500" r="4" stroke="#c9c7c7" strokeWidth="1.200" /><path d="M5.600 8.400 1 13" stroke="#c9c7c7" strokeWidth="1.200" /></Svg>
          <Fit w={135}>Digite aqui para pesquisar</Fit>
        </Search>
        <Task $w={37}><Svg w={13} h={13} vb="0 0 13 13"><circle cx="6.500" cy="6.500" r="5" stroke="#f0f0f0" strokeWidth="1.700" /></Svg></Task>
        <Task $w={37}><Svg w={14} h={13} vb="0 0 14 13"><path d="M1 .5V2.500h8V.5M1 12.500v-2h8v2M1.500 4.500h7v4h-7zM12 .5v12M10.800 5h2.400" stroke="#d8d8d8" strokeWidth="1.200" /></Svg></Task>
        <Task $w={40}>
          <Svg w={18} h={16} vb="0 0 18 16"><path d="M1 1.500h6l1.500 2H17V14H1z" fill="#f3c64f" /><path d="M1 5h16v9H1z" fill="#fadb7c" /><path d="M3.500 15.500V9h11v6.500H11.500v-3h-5v3z" fill="#3a93dd" /></Svg>
        </Task>
        <Task $w={38} $open>
          <Svg w={20} h={18} vb="0 0 20 18"><ellipse cx="9" cy="7" rx="8.300" ry="5.600" transform="rotate(-12 9 7)" fill="#e9e6e6" stroke="#b52a33" strokeWidth=".9" /><path d="M4 7.500 13 4" stroke="#a6a3a3" /><path d="m10 9 5 6M17.500 9 11 13" stroke="#4f8dc5" strokeWidth="1.500" /><circle cx="16.500" cy="15" r="1.700" stroke="#3d7fc0" strokeWidth="1.300" /><circle cx="10.500" cy="14.500" r="1.600" stroke="#3d7fc0" strokeWidth="1.300" /></Svg>
        </Task>
        <Task $w={38} $open>
          <ChromeWrap><ChromeIcon s={19} /><i /></ChromeWrap>
        </Task>
        <Task $w={37} $open>
          <Svg w={19} h={19} vb="0 0 18 18"><path d="M13 0 18 2v14l-5 2-8-7-3 2.500-1.500-1L4 9 .5 5.500 2 4.500 5 7zM13 5 8 9l5 4z" fill="#2390dc" fillRule="evenodd" /></Svg>
        </Task>
        <Task $w={37} $open>
          <Svg w={18} h={15} vb="0 0 18 15"><path d="M.5.500h17v14H.5z" fill="#050505" stroke="#999" /><path d="M.5.500h17v2H.5z" fill="#cfcfcf" /><path d="m3 5 2 1.500L3 8M6.500 8.500h3" stroke="#ddd" /></Svg>
        </Task>
        <Task $w={39} $open><Terminals keyed /></Task>
        <Task $w={37} $open><Terminals /></Task>
        <Task $w={37} $active><WinScpLarge /></Task>
        <Task $w={39} $open>
          <Svg w={19} h={19} vb="0 0 19 19"><circle cx="9.500" cy="9.500" r="9" fill="#1d83cf" /><path d="M1 7C3-.5 16-2 18.400 8c.6 4-5 4.800-7.400 3C13 8 9 4 4.500 5.500 2.500 6.200 1.500 7 1 7z" fill="#3ec6a6" /><path d="M9 8c-2.500 2-1.500 7 3 7.500 2 .2 4-.5 5.500-1.500C15 18 9.500 19.500 6 17 3 14 5 8.500 9 8z" fill="#0d4f9c" /><path d="M11 12c-1.500-1-2-2.500-1-4 1.500 0 2 1 1.800 2 0 1 1.700 2 4.200 1.800-1 1.200-3.500 1.200-5 .2z" fill="#231f1e" /></Svg>
        </Task>
        <Tray>
          <Gap $w={82.5} />
          <Sun />
          <Gap $w={8.5} />
          <Fit w={22.5} s={11.7}>29°C</Fit>
          <Gap $w={13} />
          <Svg w={10} h={7} vb="0 0 10 7"><path d="m1 6 4-4.500L9 6" stroke="#e2e2e2" strokeWidth="1.200" /></Svg>
          <Gap $w={9} />
          <Svg w={10} h={13} vb="0 0 10 13"><path d="M1 4h5.500v6H1zM6.500 5.500 9 4.500v5L6.500 8.500M1.500 1.500c1.500-1 3-1 4.500 0M1.500 12.300h5" stroke="#d8d8d8" strokeWidth="1.100" /></Svg>
          <Gap $w={6} />
          <Svg w={13} h={11} vb="0 0 13 11"><path d="M.6 4h2l2.500-2.500v8L2.600 7h-2zM6.800 3.800c1 1 1 2.500 0 3.500M8.600 2.400c2 2 2 4.300 0 6.300M10.500 1c2.500 2.500 2.500 6.500 0 9" stroke="#d8d8d8" /></Svg>
          <Gap $w={7} />
          <Svg w={13} h={12}><path d="M1 11C1 5 5 1 11 1M3.500 11.300C3.500 7 7 3.500 11.500 3.500M6 11.500C6 8.500 8.500 6 11.500 6M8.500 11.500c0-1.500 1.500-3 3-3" stroke="#bdbdbd" /></Svg>
          <Gap $w={5} />
          <Stack $w={20}><Fit w={17}>POR</Fit><Fit w={16}>PTB</Fit></Stack>
          <Gap $w={8} />
          <Stack $w={46}><Fit w={21}>16:09</Fit><Fit w={44}>18/08/2021</Fit></Stack>
          <Gap $w={12} />
          <Svg w={20} h={20} vb="0 0 20 20"><path d="M1 1.500h12v9H6l-2.500 2.500v-2.500H1z" fill="#eee" /><path d="M3 4h8M3 6h8M3 8h5" stroke="#333" strokeWidth=".8" /><circle cx="13" cy="13.500" r="6" fill="#333232" stroke="#777" /><text x="10.400" y="17" fill="#eee" fontSize="9.500">5</text></Svg>
          <Gap $w={7.5} />
          <TrayEdge />
        </Tray>
      </Taskbar>

      <Window>
        <Title>
          <WinScpIcon />
          <Fit w={155} s={10.5}>home - ubuntu@3.17.67.109 - WinSCP</Fit>
          <Push />
          <Svg w={78} h={10} vb="0 0 78 10"><path d="M0 5.500h8M34.500 1.500h7v7h-7zM70 1l8 8M78 1l-8 8" stroke="#eee" strokeWidth="1" /></Svg>
        </Title>
        <Menu>
          <Slot $w={5.5}><Grip /></Slot>
          {menu.map(([t, w, slot]) => <Slot key={t} $w={slot}><Fit w={w}>{t}</Fit></Slot>)}
        </Menu>
        <TopTools>
          <Strip><Items list={top1} /></Strip>
          <Gap $w={7} />
          <Strip $l={0}><Items list={top2} /></Strip>
          <Gap $w={31} />
          <Strip $l={3}>
            <Slot $w={5}><Grip /></Slot>
            <Slot $w={100}><Fit w={96}>Ajustes de transferência</Fit></Slot>
            <ComboBox $w={114}><Fit w={28.5}>Padrão</Fit><ComboButton><Tri $c="#eee" $w={6} $h={3} /></ComboButton></ComboBox>
            <Gap $w={5} />
            <Items list={[["grip", 5], ["globe", 17], ["drop", 8]]} />
          </Strip>
        </TopTools>
        <Tabs>
          <Tab $w={125} $on>
            <Monitor />
            <Fit w={83}>ubuntu@3.17.67.109</Fit>
            <Svg w={8} h={8} vb="0 0 8 8"><path d="m1 1 6 6M7 1 1 7" stroke="#333" /></Svg>
          </Tab>
          <Tab $w={75}>
            <Svg w={13} vb="0 0 13 12"><path d="M.5 3h9.500v6.500H.5z" fill="#4b90dc" stroke="#9ab" /><path d="M3 11h5" stroke="#8196aa" strokeWidth="1.300" /><path d="M10.500.500v5M8 3h5" stroke="#8a9bb0" /></Svg>
            <Fit w={50}>Nova Sessão</Fit>
          </Tab>
        </Tabs>
        <Panels>
          <Panel $w={410}>
            <Strip>
              <Slot $w={5}><Grip /></Slot>
              <ComboBox $w={94}>
                <Svg><path d="M2 .5h6L10.500 3v8.500H2z" fill="#eaf1f8" /><path d="M3.500 4h5M3.500 9.500h5" stroke="#5c8fc4" /><path d="M3.500 5.500h5V8h-5z" fill="#4a9bd6" /></Svg>
                <Fit w={67}>Meus document</Fit>
                <ComboButton><Tri $c="#eee" $w={6} $h={3} /></ComboButton>
              </ComboBox>
              <Gap $w={3} />
              <Items list={local2} />
            </Strip>
            <Strip $h={20}><Items list={local3} /></Strip>
            <PathBar><Fit w={138}>C:\Users\joao_otavio\Documents\</Fit></PathBar>
            <List>
              <Column $w={116}>
                <Head><Fit w={26}>Nome</Fit><SortMark /></Head>
                {files.map((f) => <Cell key={f[1]} $icon>{fileIcon(f[0])}<Gap $w={0} /><Fit w={f[2]}>{f[1]}</Fit></Cell>)}
              </Column>
              <Column $w={54} $right>
                <Head><Fit w={38}>Tamanho</Fit></Head>
                {files.map((f) => <Cell key={f[1]}>{f[3] && <Fit w={sizeW[f[3]] ?? 22.5}>{f[3]}</Fit>}</Cell>)}
              </Column>
              <Column $w={92.5}>
                <Head><Fit w={17.5}>Tipo</Fit></Head>
                {files.map((f) => <Cell key={f[1]}><Fit w={f[5]}>{f[4]}</Fit></Cell>)}
              </Column>
              <Column $w={115}>
                <Head><Fit w={84}>Data de modificação</Fit></Head>
                {files.map((f) => <Cell key={f[1]}><Fit w={82}>{f[6]}</Fit></Cell>)}
              </Column>
              <ListScroll>
                <Svg w={8} h={5} vb="0 0 8 5"><path d="m1 4.500 3-3 3 3" stroke="#aaa" /></Svg>
                <div />
                <Svg w={8} h={5} vb="0 0 8 5"><path d="m1 .5 3 3 3-3" stroke="#aaa" /></Svg>
              </ListScroll>
            </List>
          </Panel>
          <Splitter />
          <Panel $w={412}>
            <Strip>
              <Slot $w={5}><Grip /></Slot>
              <ComboBox $w={68}>
                <FolderIcon />
                <Fit w={24}>home</Fit>
                <ComboButton><Tri $c="#eee" $w={6} $h={3} /></ComboButton>
              </ComboBox>
              <Gap $w={3} />
              <Items list={remote2} />
            </Strip>
            <Strip $h={20}><Items list={remote3} /></Strip>
            <PathBar $active><Fit w={31}>/home/</Fit></PathBar>
            <List>
              <Column $w={117}>
                <Head><Gap $w={1} /><Fit w={25.5}>Nome</Fit><SortMark /></Head>
                <Cell $icon><Gap $w={0} /><FolderIcon up /><Gap $w={0} /><Fit w={5}>..</Fit></Cell>
                <Cell $icon $hot><Gap $w={0} /><FolderIcon /><Focus><Fit w={30}>ubuntu</Fit></Focus></Cell>
              </Column>
              <Column $w={53.5} $right>
                <Head><Fit w={38}>Tamanho</Fit></Head>
              </Column>
              <Column $w={116}>
                <Head><Fit w={84}>Data de modificação</Fit></Head>
                <Cell><Fit w={79.5}>18/08/2021 15:46:39</Fit></Cell>
                <Cell><Fit w={79.5}>18/08/2021 15:47:33</Fit></Cell>
              </Column>
              <Column $w={60.5}>
                <Head><Fit w={31}>Direitos</Fit></Head>
                <Cell><Fit w={37}>rwxr-xr-x</Fit></Cell>
                <Cell><Fit w={37}>rwxr-xr-x</Fit></Cell>
              </Column>
              <Column $w={48}>
                <Head><Fit w={36}>Proprie...</Fit></Head>
                <Cell><Fit w={17}>root</Fit></Cell>
                <Cell><Fit w={30}>ubuntu</Fit></Cell>
              </Column>
            </List>
          </Panel>
        </Panels>
        <StatusRow>
          <Slot $w={372.5}><Fit w={106}>0 B de 1,39 MB em 0 de 25</Fit></Slot>
          <Slot $w={41.5}><Fit w={33}>9 oculto</Fit></Slot>
          <Fit w={81}>0 B de 0 B em 0 de 1</Fit>
        </StatusRow>
        <BottomRow>
          <StatusCell $w={27}><Svg><path d="M3 6V3.800a3 3 0 0 1 6 0V6" stroke="#d9a42a" strokeWidth="1.500" /><path d="M1.500 5.500h9v6h-9z" fill="#f5b92e" /><path d="M5.500 7.500h1v2.500h-1z" fill="#6b4c0a" /></Svg></StatusCell>
          <StatusCell $w={54}><Fit w={28}>SFTP-3</Fit></StatusCell>
          <StatusCell $w={27}><Svg><path d="M.5 1h6.500v7H.5zM8 .5h3.500v11H8zM2 9.500h5" fill="#6b6b6d" stroke="#858587" strokeWidth=".8" /></Svg></StatusCell>
          <StatusCell $w={63}><Fit w={28}>0:00:11</Fit></StatusCell>
          <Resize />
        </BottomRow>
      </Window>

      <Overlay width="70" height="50" viewBox="470 166 70 50" fill="none">
        <path d="M478.300 170.500V189.500C486 190.500 501 189 506 188.500C514 187 519 184 520.300 178V173C510 172 492 174 479 172.500" stroke="#0509f5" strokeWidth="1.800" />
        <path d="M519.700 194.500v12.300l2.900-2.600 2 4.300 2.300-1-2-4.300h3.900z" fill="#fff" stroke="#222" strokeWidth=".5" />
      </Overlay>
    </Screen>
  );
}
